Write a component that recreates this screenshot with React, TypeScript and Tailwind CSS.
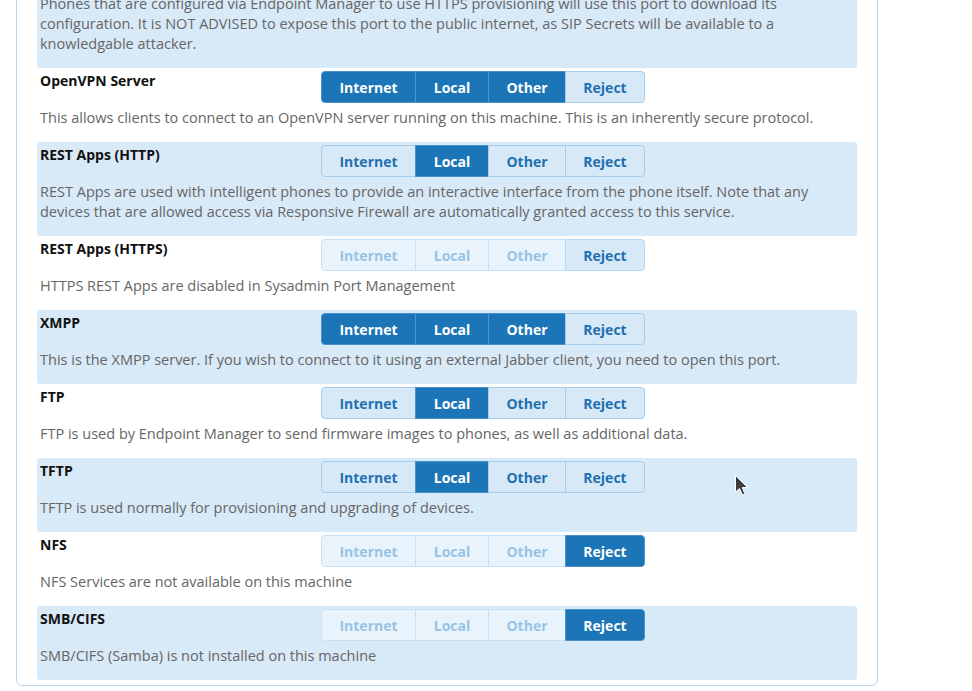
import React from "react";

type State = "active" | "inactive" | "disabled" | "selDisabled";

const LABELS = ["Internet", "Local", "Other", "Reject"];
const WIDTHS = ["w-[95px]", "w-[74px]", "w-[78px]", "w-[80px]"];

type Row = {
  title: string;
  desc: string;
  states: State[];
};

const A: State = "active";
const I: State = "inactive";
const D: State = "disabled";
const S: State = "selDisabled";

const rows: Row[] = [
  {
    title: "HTTPS Provisioning",
    desc:
      "Phones that are configured via Endpoint Manager to use HTTPS provisioning will use this port to download its configuration. It is NOT ADVISED to expose this port to the public internet, as SIP Secrets will be available to a knowledgable attacker.",
    states: [I, A, I, I],
  },
  {
    title: "OpenVPN Server",
    desc:
      "This allows clients to connect to an OpenVPN server running on this machine. This is an inherently secure protocol.",
    states: [A, A, A, I],
  },
  {
    title: "REST Apps (HTTP)",
    desc:
      "REST Apps are used with intelligent phones to provide an interactive interface from the phone itself. Note that any devices that are allowed access via Responsive Firewall are automatically granted access to this service.",
    states: [I, A, I, I],
  },
  {
    title: "REST Apps (HTTPS)",
    desc: "HTTPS REST Apps are disabled in Sysadmin Port Management",
    states: [D, D, D, S],
  },
  {
    title: "XMPP",
    desc:
      "This is the XMPP server. If you wish to connect to it using an external Jabber client, you need to open this port.",
    states: [A, A, A, I],
  },
  {
    title: "FTP",
    desc:
      "FTP is used by Endpoint Manager to send firmware images to phones, as well as additional data.",
    states: [I, A, I, I],
  },
  {
    title: "TFTP",
    desc: "TFTP is used normally for provisioning and upgrading of devices.",
    states: [I, A, I, I],
  },
  {
    title: "NFS",
    desc: "NFS Services are not available on this machine",
    states: [D, D, D, A],
  },
  {
    title: "SMB/CIFS",
    desc: "SMB/CIFS (Samba) is not installed on this machine",
    states: [D, D, D, A],
  },
];

function segClass(s: State): string {
  switch (s) {
    case "active":
      return "bg-[#1c75b6] text-white border-[#4b92cc]";
    case "inactive":
      return "bg-[#d7e9f7] text-[#1f70b0] border-[#a8cdea]";
    case "selDisabled":
      return "bg-[#d7e9f7] text-[#1f70b0] border-[#b9d8f0]";
    default:
      return "bg-[#e8f3fc] text-[#98c3e4] border-[#c8e0f3]";
  }
}

function ButtonGroup({ states }: { states: State[] }) {
  return (
    <div className="flex h-[32px]">
      {LABELS.map((l, i) => (
        <div
          key={l}
          className={
            "flex items-center justify-center border text-[14px] font-bold " +
            WIDTHS[i] +
            " " +
            segClass(states[i]) +
            (i === 0 ? " rounded-l-[4px]" : " -ml-px") +
            (i === 3 ? " rounded-r-[4px]" : "")
          }
        >
          {l}
        </div>
      ))}
    </div>
  );
}

export default function App() {
  return (
    <div
      className="relative h-[691px] w-[972px] overflow-hidden bg-white"
      style={{ fontFamily: '"Open Sans", "Noto Sans", sans-serif' }}
    >
      <div className="ml-[16px] mt-[-47px] w-[862px] rounded-b-[6px] border border-[#b7d6ef] px-[20px] pb-[5px]">
        {rows.map((r, idx) => (
          <div
            key={r.title}
            className={
              "rounded-[3px] px-[3px] pt-[3px] pb-[14px] " +
              (idx % 2 === 0 ? "bg-[#d8e9f7]" : "bg-white")
            }
          >
            <div className="flex items-start">
              <div className="w-[281px] text-[14px] font-bold leading-[20px] text-[#111]">
                {r.title}
              </div>
              <ButtonGroup states={r.states} />
            </div>
            <div className="mt-[5px] text-[14.5px] leading-[20px] text-[#666]">
              {r.desc}
            </div>
          </div>
        ))}
      </div>
      <svg
        className="absolute left-[734px] top-[474px]"
        width="16"
        height="24"
        viewBox="0 0 16 24"
      >
        <path
          d="M1.5 1.5 L1.5 18 L5.5 14.5 L8.5 21 L11 20 L8.2 13.5 L13.5 13.5 Z"
          fill="#3c3c3c"
          stroke="#ffffff"
          strokeWidth="1"
          strokeLinejoin="round"
        />
      </svg>
    </div>
  );
}
